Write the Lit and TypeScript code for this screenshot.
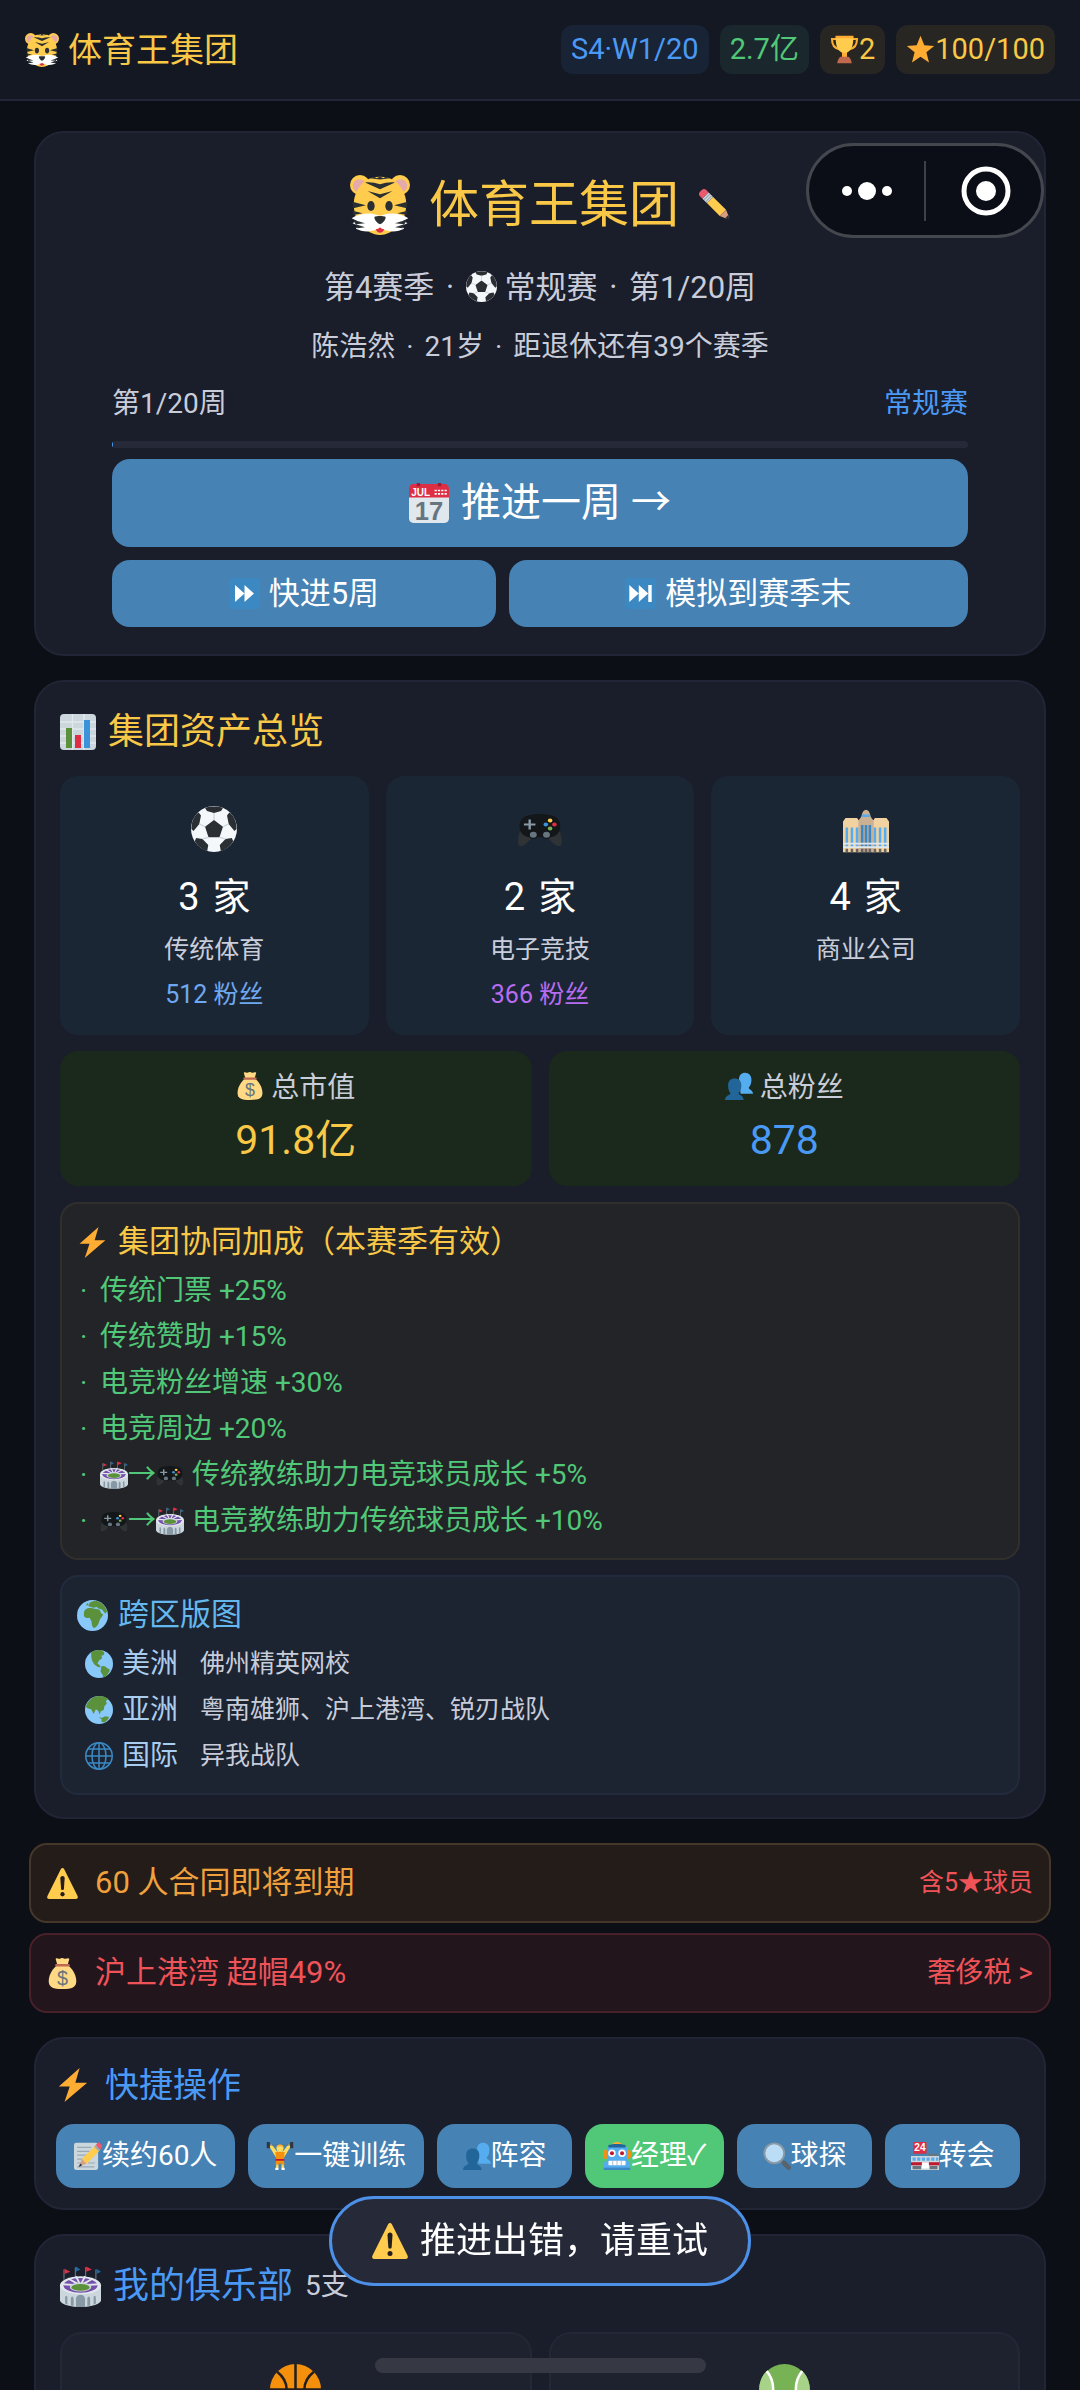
import { LitElement, html, svg, css, nothing } from "lit";
import type { SVGTemplateResult } from "lit";
import { customElement, property } from "lit/decorators.js";
import { classMap } from "lit/directives/class-map.js";
import { styleMap } from "lit/directives/style-map.js";

// All glyphs are drawn on a 36x36 grid.
const ICONS: Record<string, SVGTemplateResult> = {
  tiger: svg`
    <circle cx="6" cy="6" r="6" fill="#ffcc4d" />
    <circle cx="30" cy="6" r="6" fill="#ffcc4d" />
    <circle cx="5.6" cy="6.4" r="3.9" fill="#e6aaaa" />
    <circle cx="30.4" cy="6.4" r="3.9" fill="#e6aaaa" />
    <path fill="#ffcc4d" d="M18 1c3 0 5.500.5 8 2 3.500 2.200 6.500 6.500 7.500 11.500.8 5-.5 12-4 16C26 33.500 22.500 36 18 36S10 33.500 6.500 30.500c-3.500-4-4.800-11-4-16C3.500 9.500 6.500 5.200 10 3c2.500-1.500 5-2 8-2z" />
    <path fill="#292f33" d="M9 4.500c3-.3 6 .1 9 1.100 3-1 6-1.400 9-1.100L18 8.500zM10.500 9.600l7.500 1.900 7.500-1.900L18 14zM12 1.900l2.500-.9 1.500.9 2-1 2 1 1.500-.9 2.500.9-6 .8z" />
    <path fill="#292f33" d="M1.500 16l8 2.200L2 20zM34.500 16l-8 2.200L34 20zM1.500 21.500l6 1.500-5.500 1zM34.500 21.500l-6 1.500 5.500 1z" />
    <path fill="#fff" d="M1 26c4-2.600 9-3.300 13-2.600l4 1 4-1c4-.7 9 0 13 2.600l-3 1.500 2.500 1.500-3.500 1.500 1.500 1.800c-4 2-10 2.300-14.500-.6C13.500 34.600 7.500 34.300 3.500 32.300L5 30.500 1.500 29 4 27.500z" />
    <path fill="#292f33" d="M2 26.800l7 2.200-5.500.5 5.500 1.800-4.500.7zM34 26.800l-7 2.200 5.500.5-5.500 1.800 4.500.7z" />
    <ellipse cx="12.600" cy="18.600" rx="2.200" ry="3" fill="#292f33" />
    <ellipse cx="23.400" cy="18.600" rx="2.200" ry="3" fill="#292f33" />
    <path fill="#292f33" d="M14.700 25c1.500-.6 5.100-.6 6.600 0 .4 1.800-1.800 4-3.300 4.500-1.500-.5-3.700-2.700-3.300-4.500z" />
    <path fill="#dd2e44" d="M15.500 32.600c1 0 2-.5 2.500-1.200.5.700 1.500 1.200 2.500 1.200-.4 1.500-1.300 2-2.500 2s-2.100-.5-2.500-2z" />`,
  trophy: svg`
    <path fill="none" stroke="#ffac33" stroke-width="2.600" d="M9 5H2.500c0 7 2.500 11.500 9 12.500M27 5h6.500c0 7-2.500 11.500-9 12.500" />
    <path fill="#ffcc4d" d="M7 2h22c0 10-1.500 17-8 20v5h-6v-5C8.500 19 7 12 7 2z" />
    <path fill="#ffac33" d="M7 1h22v3H7zM15 22h6v6h-6z" />
    <path fill="#c1694f" d="M13 27h10c2 1.500 3.500 4 4 8H9c.5-4 2-6.500 4-8z" />`,
  star: svg`<path fill="#ffac33" d="M18 1l4.700 11.700L35 13.500l-9.700 8L28.600 34 18 27 7.400 34l3.300-12.500-9.700-8 12.300-.8z" />`,
  pencil: svg`
    <path fill="#ea596e" d="M2 9C.8 7.800.8 5.700 2 4.500L4.500 2C5.700.8 7.800.8 9 2l3 3-7 7z" />
    <path fill="#ccd6dd" d="M5 12l7-7 5 5-7 7z" />
    <path stroke="#99aab5" stroke-width="1.200" d="M6.500 13.500l7-7M8.500 15.500l7-7" />
    <path fill="#ffcc4d" d="M10 17l7-7 14.500 14.500-7 7z" />
    <path fill="#d99e82" d="M24.500 31.500l7-7L35 33c.5 1.500-.5 2.500-2 2z" />
    <path fill="#292f33" d="M34 30.500l1.200 3.200c.3 1-.5 1.800-1.500 1.500l-3.200-1.200z" />`,
  soccer: svg`
    <circle cx="18" cy="18" r="18" fill="#f5f8fa" />
    <path fill="#292f33" d="M18 11l7 5.200-2.700 8.300h-8.600L11 16.200zM11 1.500C15 0 21 0 25 1.500L23.500 4 18 5.500 12.500 4zM.5 15C1 11 3 7 6 5l1.800 2.500L6.500 14 2 19.500.3 18zM35.500 15C35 11 33 7 30 5l-1.800 2.500L29.500 14l4.500 5.500 1.700-1.500zM4 25l5 .8 4.500 4.700-.8 4.700C8.500 34 5 31 3 27.500zM32 25l-5 .8-4.500 4.700.8 4.700c4.200-1.200 7.700-4.200 9.700-7.700z" />
    <path stroke="#ccd6dd" d="M18 11V5.500M25 16.200l4.500-2.200M11 16.200L6.500 14M22.300 24.500l4.700 1.300M13.700 24.500L9 25.800" />`,
  calendar: svg`
    <path fill="#e1e8ed" d="M0 9h36v23c0 2.200-1.800 4-4 4H4c-2.200 0-4-1.800-4-4z" />
    <path fill="#dd2e44" d="M4 1h28c2.200 0 4 1.800 4 4v8H0V5c0-2.200 1.800-4 4-4z" />
    <path fill="#fff" d="M23 6h2v1.500h-2zM26 6h2v1.500h-2zM29 6h2v1.500h-2zM32 6h2v1.500h-2zM23 9h2v1.500h-2zM26 9h2v1.500h-2zM29 9h2v1.500h-2zM32 9h2v1.500h-2z" />
    <path fill="#a01c30" d="M7 0h3v3H7zM26 0h3v3h-3z" />
    <text x="2" y="11.500" font-size="9" font-weight="700" fill="#fff">JUL</text>
    <text x="18" y="33" font-size="23" font-weight="700" fill="#66757f" text-anchor="middle">17</text>`,
  forward: svg`
    <rect width="36" height="36" rx="4" fill="#3b88c3" />
    <path fill="#fff" d="M7 8l11 10L7 28zM18 8l11 10-11 10z" />`,
  skip: svg`
    <rect width="36" height="36" rx="4" fill="#3b88c3" />
    <path fill="#fff" d="M5 8l11 10L5 28zM16 8l11 10-11 10zM27 8h4v20h-4z" />`,
  chart: svg`
    <rect width="36" height="36" rx="4" fill="#ccd6dd" />
    <path stroke="#e1e8ed" stroke-width="1.500" d="M0 8h36M0 15h36M0 22h36M0 29h36M12.500 0v36M24 0v36" />
    <path fill="#5c913b" d="M6 14h6v20H6z" />
    <path fill="#dd2e44" d="M15 21h6v13h-6z" />
    <path fill="#3b94d9" d="M24 6h6v28h-6z" />`,
  gamepad: svg`
    <g transform="translate(1 4) scale(.94 .82)">
      <path fill="#2f3336" d="M2 18C-.5 24-1 31 1 33c3 2 8-4 11-9zM34 18c2.500 6 3 13 1 15-3 2-8-4-11-9z" />
      <path fill="#141719" d="M9 4c6-1.500 12-1.500 18 0 5 .5 8 5 8 11s-4 10-9 10H10c-5 0-9-4-9-10S4 4.500 9 4z" />
      <circle cx="12.500" cy="22.500" r="4" fill="#141719" />
      <circle cx="23.500" cy="22.500" r="4" fill="#141719" />
      <circle cx="12.500" cy="22.500" r="2.900" fill="#66757f" />
      <circle cx="23.500" cy="22.500" r="2.900" fill="#66757f" />
      <path fill="#8899a6" d="M8.500 8h2v3.800h3.800v2h-3.800v3.800h-2v-3.800H4.700v-2h3.800z" />
      <circle cx="26.500" cy="9" r="1.900" fill="#ffcc4d" />
      <circle cx="26.500" cy="16.500" r="1.900" fill="#77b255" />
      <circle cx="22.900" cy="12.700" r="1.900" fill="#3b94d9" />
      <circle cx="30.100" cy="12.700" r="1.900" fill="#dd2e44" />
    </g>`,
  hotel: svg`
    <g transform="translate(0 3) scale(1 .92)">
      <path fill="#f3d2a2" d="M0 10l2-3h9l2 3v26H0zM23 10l2-3h9l2 3v26H23z" />
      <path fill="#ccb094" d="M12 10c0-2 2-2.500 2.500-5C15 2 16.500 0 18 0s3 2 3.500 5c.5 2.500 2.500 3 2.500 5v26H12z" />
      <path fill="#55acee" d="M2 15h2v17H2zM6 15h2v17H6zM10 15h2v17h-2zM24 15h2v17h-2zM28 15h2v17h-2zM32 15h2v17h-2zM15 4h6v2h-6z" />
      <path fill="#3b88c3" d="M14 13h2v19h-2zM17 13h2v19h-2zM20 13h2v19h-2z" />
      <path fill="#e1e8ed" d="M0 28h36v1.500H0zM0 31h36v1.500H0z" />
      <path fill="#66625e" d="M2 33h2v3H2zM6 33h2v3H6zM10 33h2v3h-2zM14 33h2v3h-2zM17 33h2v3h-2zM20 33h2v3h-2zM24 33h2v3h-2zM28 33h2v3h-2zM32 33h2v3h-2z" />
    </g>`,
  moneybag: svg`
    <path fill="#ffd983" d="M11 9h14c6 5 9 12 9 18 0 7-5 9-16 9S2 34 2 27C2 21 5 14 11 9z" />
    <path fill="#ffd983" d="M10 1c2-1.500 3 .5 4.500 0S17 0 18 0s2 1 3.500 1S24-.5 26 1l-2 7H12z" />
    <path fill="#bf6952" d="M10.500 7h15c1.500 0 1.500 3 0 3h-15c-1.500 0-1.500-3 0-3z" />
    <text x="18" y="31" font-size="23" fill="#67757f" text-anchor="middle">$</text>`,
  people: svg`
    <path fill="#55acee" d="M18 10c0-6 3-9 8-9s8 4 8 9-1.500 8-3.500 10c0 3 5.500 3 5.500 8H20z" />
    <path fill="#226699" d="M4 17c0-5 3-8.500 8.500-8.500S21 12 21 17s-1.500 8-3.500 10c0 3 6.500 3 6.500 9H0c0-6 7-6 7-9-2-2-3-5-3-10z" />`,
  bolt: svg`<path fill="#ffac33" d="M25 0L3 19.500h11.500L9 36l24-20.500H20.500z" />`,
  stadium: svg`
    <path stroke="#66757f" d="M3.500 3v9M13.500 1v9M22.500 1v9M31.500 3v9" />
    <path fill="#dd2e44" d="M4 2.500L9 5 4 7zM23 .5L28 3l-5 2z" />
    <path fill="#226699" d="M14 .5L18 3l-4 2zM32 2.500L36 5l-4 2z" />
    <path fill="#ccd6dd" d="M0 17v13c0 3 8 6 18 6s18-3 18-6V17z" />
    <ellipse cx="18" cy="17" rx="18" ry="8" fill="#e1e8ed" />
    <ellipse cx="18" cy="17" rx="15" ry="6.500" fill="#744eaa" />
    <path stroke="#e1e8ed" stroke-width="1.600" d="M18 17L7 11M18 17L14 9M18 17l4-8M18 17l11-6M18 17L2 16M18 17l16-1" />
    <ellipse cx="18" cy="18.500" rx="9.500" ry="4" fill="#ccd6dd" />
    <ellipse cx="18" cy="18.800" rx="8" ry="3" fill="#5c913b" />
    <path fill="#8899a6" d="M14 36v-7c0-5 8-5 8 0v7zM9.500 34.800V29c0-3 2.500-3 2.500 0v6zM24 35v-6c0-3 2.500-3 2.500 0v5.800zM4.500 33v-5c0-2.500 2-2.500 2 0v6zM29.500 34v-6c0-2.500 2-2.500 2 0v5z" />`,
  africa: svg`
    <circle cx="18" cy="18" r="18" fill="#88c9f9" />
    <path fill="#5c913b" d="M9 12c2-3 6-3 9-2.500 3 1 6 1 8 1.500l2.500 5 2 .5c-1 3-4 5-4.500 8-1 4-3 7-6 8-2 0-3-4-3-7 0-2-2-3-2-5-4 1-7 0-7-3 0-2 0-4 1-5.500zM13 7l2-4 5-2c8 .5 13 6 15 12l-2 3-4-5-4-1-2-2-4 1-3-1zM10 6l3-3v3z" />`,
  americas: svg`
    <circle cx="18" cy="18" r="18" fill="#88c9f9" />
    <path fill="#5c913b" d="M8 3c4-3 10-3.500 14-2.500l3 3-1 3-3 1 1 3-4 3-2 4 3 2 1 3-4-1-4-3-3-5-1-5zM21 21c3-1 6 0 7 2l4 2c0 3-3 6-5 9l-4 1.500c1-4-2-5-3-8z" />`,
  asia: svg`
    <circle cx="18" cy="18" r="18" fill="#88c9f9" />
    <path fill="#5c913b" d="M3 9C7 3 12 0 18 0c5 0 9 1.500 12 4l-3 2 1 4-3 3-1 5-4 2-1 4-2-5-3-2-3 6-3-6-4-1-3-2zM18 27l3 1 3 1-3 1zM22 28l4-2 5 1c-1 3-3 5-6 7l-4-1z" />`,
  meridians: svg`
    <g fill="none" stroke="#3b88c3" stroke-width="2">
      <circle cx="18" cy="18" r="17" />
      <ellipse cx="18" cy="18" rx="9" ry="17" />
      <path d="M18 1v34M1 18h34M4 9h28M4 27h28" />
    </g>`,
  warning: svg`
    <path fill="#ffcc4d" d="M2.700 36c-2 0-3.200-1.700-2.200-3.600L16 1.500c1-2 3-2 4 0l15.500 30.900c1 1.900-.2 3.600-2.200 3.600z" />
    <path fill="#231f20" d="M15.500 12c0-3.500 5-3.500 5 0l-.8 12c-.2 2.200-3.200 2.200-3.400 0z" />
    <circle cx="18" cy="30.500" r="2.500" fill="#231f20" />`,
  memo: svg`
    <rect y="1" width="31" height="35" rx="3" fill="#ccd6dd" />
    <path stroke="#99aab5" stroke-width="1.600" d="M4 7h18M4 12h16M4 17h12M4 22h9M4 27h5M18 27h9M4 32h22" />
    <path fill="#ffcc4d" d="M10 22L27 5l6 6-17 17z" />
    <path fill="#d99e82" d="M10 22l6 6-9 3z" />
    <path fill="#292f33" d="M8 27.500l2.500 2.500L6 32z" />
    <path fill="#99aab5" d="M26 6l2-2 6 6-2 2z" />
    <path fill="#ea596e" d="M28 4l2.500-3C32-.5 37 4 36 6l-2 4z" />`,
  lifter: svg`
    <path fill="#ffdc5d" d="M4 5l3-2 7 9h8l7-9 3 2-7 12-2 3H13l-2-3z" />
    <path stroke="#66757f" d="M3 4h30" />
    <path fill="#31373d" d="M1 0h4v8H1zM31 0h4v8h-4z" />
    <circle cx="18" cy="8" r="4.500" fill="#ffdc5d" />
    <path fill="#ffac33" d="M13.500 7C13 2 23 2 22.500 7 20 5 16 5 13.500 7z" />
    <path fill="#f4900c" d="M12 13h12l-1 11 1 5h-5l-1-3-1 3h-5l1-5z" />
    <path fill="#be1931" d="M12.500 22h11l.3 2H12.200z" />
    <path fill="#ffdc5d" d="M13 29h3v5h-3zM20 29h3v5h-3z" />
    <path fill="#fff" d="M12 33h4v3h-4zM20 33h4v3h-4z" />`,
  robot: svg`
    <path fill="#ffac33" d="M12 3c1-4 11-4 12 0z" />
    <rect y="10" width="36" height="12" rx="4" fill="#f4900c" />
    <path fill="#55acee" d="M5 7c4-3 22-3 26 0v18h2c1.500 0 2 1 2 2v9H1v-9c0-1 .5-2 2-2h2z" />
    <path fill="#226699" d="M7 4c6-2 16-2 22 0v3H7z" />
    <circle cx="11.500" cy="14.500" r="4.800" fill="#fff" />
    <circle cx="24.500" cy="14.500" r="4.800" fill="#fff" />
    <circle cx="11.500" cy="14.500" r="2.600" fill="#be1931" />
    <circle cx="24.500" cy="14.500" r="2.600" fill="#be1931" />
    <rect x="7" y="24" width="22" height="6" rx="1" fill="#fff" />
    <path stroke="#99aab5" d="M12.500 24v6M18 24v6M23.500 24v6" />
    <path fill="#3b88c3" d="M1 33h34v3H1z" />`,
  magnifier: svg`
    <path stroke="#66757f" stroke-width="3" d="M22 22l5 5" />
    <path stroke="#58636c" stroke-width="6" stroke-linecap="round" d="M27 27l6 6" />
    <circle cx="14.500" cy="14.500" r="14" fill="#8899a6" />
    <circle cx="14.500" cy="14.500" r="11.500" fill="#bbddf5" />`,
  store: svg`
    <rect x="3" width="17" height="15" rx="1" fill="#dd2e44" />
    <text x="11.500" y="12" font-size="13" font-weight="700" fill="#fff" text-anchor="middle">24</text>
    <path fill="#66757f" d="M22 15h13v3H22z" />
    <path fill="#ccd6dd" d="M0 18h36v18H0z" />
    <path fill="#55acee" d="M2 20h4v4H2zM8 20h4v4H8zM14 20h4v4h-4zM20 20h4v4h-4zM26 20h4v4h-4zM32 20h3v4h-3z" />
    <path fill="#be1931" d="M0 26h36v4H0z" />
    <path fill="#66757f" d="M2 31h11v4H2zM24 31h10v4H24z" />
    <path fill="#fff" d="M14 26h9v8h-9z" />`,
  basketball: svg`
    <circle cx="18" cy="18" r="18" fill="#f4900c" />
    <path fill="none" stroke="#231f20" stroke-width="1.800" d="M18 0v36M0 18h36M5 5.500c9 7 9 18 0 25M31 5.500c-9 7-9 18 0 25" />`,
  tennis: svg`
    <circle cx="18" cy="18" r="18" fill="#77b255" />
    <path fill="#a6d388" d="M5.500 5c6 7 6 19 0 26C-1.500 25-1.500 11 5.500 5zM30.500 5c-6 7-6 19 0 26 7-6 7-20 0-26z" />
    <path fill="none" stroke="#fff" stroke-width="1.800" d="M5.500 5c6 7 6 19 0 26M30.500 5c-6 7-6 19 0 26" />`,
};

@customElement("emoji-icon")
export class EmojiIcon extends LitElement {
  static override styles = css`
    :host {
      display: inline-block;
      flex: none;
      width: 1em;
      height: 1em;
      line-height: 1;
      vertical-align: -0.12em;
    }

    svg {
      display: block;
      width: 100%;
      height: 100%;
      overflow: visible;
      font-family: "Liberation Sans", sans-serif;
    }
  `;

  @property()
  name = "";

  override render() {
    return html`<svg viewBox="0 0 36 36" aria-hidden="true">
      ${ICONS[this.name] ?? nothing}
    </svg>`;
  }
}

const icon = (name: string) => html`<emoji-icon name=${name}></emoji-icon>`;

const separator = html`<span class="separator">·</span>`;

const ASSETS = [
  { icon: "soccer", count: 3, label: "传统体育", fans: 512, tone: "blue" },
  { icon: "gamepad", count: 2, label: "电子竞技", fans: 366, tone: "purple" },
  { icon: "hotel", count: 4, label: "商业公司", fans: 0, tone: "" },
];

const BONUSES = ["传统门票 +25%", "传统赞助 +15%", "电竞粉丝增速 +30%", "电竞周边 +20%"];

const COACHING = [
  { from: "stadium", to: "gamepad", text: "传统教练助力电竞球员成长 +5%" },
  { from: "gamepad", to: "stadium", text: "电竞教练助力传统球员成长 +10%" },
];

const REGIONS = [
  { icon: "americas", name: "美洲", teams: ["佛州精英网校"] },
  { icon: "asia", name: "亚洲", teams: ["粤南雄狮", "沪上港湾", "锐刃战队"] },
  { icon: "meridians", name: "国际", teams: ["异我战队"] },
];

const ACTIONS = [
  { icon: "memo", label: "续约60人" },
  { icon: "lifter", label: "一键训练" },
  { icon: "people", label: "阵容" },
  { icon: "robot", label: "经理✓", active: true },
  { icon: "magnifier", label: "球探" },
  { icon: "store", label: "转会" },
];

@customElement("app-root")
export class AppRoot extends LitElement {
  static override styles = css`
    :host {
      --gold: #f9c846;
      --blue: #4a9af5;
      --green: #50c878;
      --red: #ef5358;
      --steel: #4682b4;
      --muted: #c9cdda;
      display: block;
      height: 100vh;
      overflow: hidden;
      background: #0c0f16;
      color: #fff;
      font-family: Roboto, "Noto Sans CJK SC", sans-serif;
      font-size: 28px;
      line-height: 40px;
    }

    h1,
    h2,
    h3,
    p,
    ul {
      margin: 0;
      padding: 0;
      font-weight: 400;
      list-style: none;
    }

    button {
      border: 0;
      padding: 0;
      color: #fff;
      font: inherit;
      cursor: pointer;
    }

    .topbar {
      display: flex;
      align-items: center;
      justify-content: space-between;
      padding: 25px;
      border-bottom: 2px solid #222637;
      background: #141823;
    }

    .brand {
      display: flex;
      align-items: center;
      gap: 9px;
      color: var(--gold);
      font-size: 34px;
    }

    .pills {
      display: flex;
      gap: 11px;
    }

    .pill {
      display: flex;
      align-items: center;
      padding: 0 10px;
      border-radius: 12px;
      font-size: 29px;
      line-height: 49px;
    }

    .pill.season {
      background: #182336;
      color: var(--blue);
    }

    .pill.cash {
      background: #1a272c;
      color: var(--green);
    }

    .pill.gold {
      background: #272622;
      color: var(--gold);
    }

    main {
      display: flex;
      flex-direction: column;
      gap: 24px;
      padding: 30px 34px;
    }

    .card {
      padding: 24px;
      border: 2px solid #212535;
      border-radius: 30px;
      background: #1a1d2a;
    }

    .hero {
      padding: 38px 76px 27px;
      text-align: center;
    }

    .title {
      display: flex;
      align-items: center;
      justify-content: center;
      gap: 19px;
    }

    .title h1 {
      color: var(--gold);
      font-size: 50px;
      line-height: 68px;
    }

    .title .mascot {
      font-size: 60px;
    }

    .rename {
      background: none;
      font-size: 32px;
    }

    .season-line {
      margin-top: 25px;
      color: var(--muted);
      font-size: 31px;
      line-height: 48px;
    }

    .owner {
      margin-top: 15px;
      color: var(--muted);
    }

    .separator {
      margin: 0 4px;
    }

    .week {
      display: flex;
      justify-content: space-between;
      margin-top: 17px;
      color: var(--muted);
    }

    .stage {
      color: var(--blue);
    }

    .progress {
      height: 7px;
      margin-top: 17px;
      border-radius: 4px;
      overflow: hidden;
      background: #262a38;
    }

    .progress-fill {
      height: 100%;
      background: var(--blue);
    }

    .advance {
      display: flex;
      align-items: center;
      justify-content: center;
      gap: 12px;
      width: 100%;
      height: 88px;
      margin-top: 11px;
      border-radius: 18px;
      background: var(--steel);
      font-size: 40px;
    }

    .skips {
      display: flex;
      gap: 13px;
      margin-top: 13px;
    }

    .skips button {
      display: flex;
      flex: 1 1 auto;
      align-items: center;
      justify-content: center;
      gap: 9px;
      height: 67px;
      border-radius: 18px;
      background: var(--steel);
      font-size: 31px;
    }

    .heading {
      display: flex;
      align-items: center;
      gap: 12px;
      font-size: 36px;
      line-height: 52px;
    }

    .gold-text {
      color: var(--gold);
    }

    .blue-text {
      color: var(--blue);
    }

    .overview {
      padding-bottom: 22px;
    }

    .assets {
      display: grid;
      grid-template-columns: repeat(3, 1fr);
      gap: 17px;
      margin-top: 18px;
    }

    .asset {
      display: flex;
      flex-direction: column;
      align-items: center;
      padding: 30px 12px 18px;
      border-radius: 18px;
      background: #1b2635;
      font-size: 25px;
      line-height: 45px;
    }

    .asset emoji-icon {
      font-size: 46px;
    }

    .count {
      display: flex;
      gap: 13px;
      margin: 16px 0 1px;
      font-size: 38px;
      line-height: 58px;
    }

    .label {
      color: var(--muted);
    }

    .fans.blue {
      color: #6ea8f0;
    }

    .fans.purple {
      color: #b76cf0;
    }

    .totals {
      display: grid;
      grid-template-columns: repeat(2, 1fr);
      gap: 17px;
      margin-top: 16px;
    }

    .total {
      padding: 17px 12px 14px;
      border-radius: 18px;
      background: #1b281c;
      text-align: center;
    }

    .total .value {
      font-size: 41px;
      line-height: 64px;
    }

    .box {
      margin-top: 16px;
      padding: 14px 15px;
      border: 2px solid;
      border-radius: 18px;
    }

    .box.synergy {
      border-color: #302f2c;
      background: #232428;
    }

    .box.regions {
      margin-top: 15px;
      border-color: #222b3c;
      background: #1c2432;
    }

    .box h3 {
      display: flex;
      align-items: center;
      gap: 10px;
      margin-bottom: 2px;
      font-size: 31px;
      line-height: 48px;
    }

    .regions h3 {
      color: #64b8ee;
    }

    .bonus {
      display: flex;
      align-items: center;
      color: var(--green);
      line-height: 46px;
    }

    .bonus .dot {
      width: 20px;
      padding-left: 3px;
    }

    .bonus .transfer {
      display: flex;
      align-items: center;
      margin-right: 8px;
    }

    .region {
      display: flex;
      align-items: center;
      padding-left: 8px;
      line-height: 46px;
    }

    .region .name {
      margin: 0 22px 0 9px;
      color: #a9cdee;
    }

    .region .teams {
      color: var(--muted);
      font-size: 25px;
    }

    .alerts {
      display: flex;
      flex-direction: column;
      gap: 10px;
      margin: 0 -5px;
    }

    .alert {
      display: flex;
      align-items: center;
      gap: 17px;
      height: 80px;
      padding: 0 16px;
      border: 2px solid;
      border-radius: 18px;
      box-sizing: border-box;
      font-size: 31px;
      text-decoration: none;
    }

    .alert .note {
      margin-left: auto;
      color: var(--red);
      font-size: 28px;
    }

    .alert .note.small {
      font-size: 25px;
    }

    .alert.contract {
      border-color: #45372a;
      background: #231c19;
      color: #f0a03c;
    }

    .alert.tax {
      border-color: #47202a;
      background: #22151c;
      color: var(--red);
    }

    .quick {
      padding: 20px 24px 20px 20px;
    }

    .quick .heading {
      gap: 15px;
      font-size: 34px;
    }

    .actions {
      display: flex;
      gap: 13px;
      margin-top: 13px;
    }

    .action {
      display: flex;
      flex: 1 1 auto;
      align-items: center;
      justify-content: center;
      min-width: 135px;
      height: 64px;
      padding: 0 16px;
      border-radius: 18px;
      background: var(--steel);
      white-space: nowrap;
    }

    .action.active {
      background: var(--green);
    }

    .clubs .heading emoji-icon {
      font-size: 41px;
    }

    .clubs .heading small {
      color: var(--muted);
      font-size: 28px;
    }

    .club-grid {
      display: grid;
      grid-template-columns: repeat(2, 1fr);
      gap: 17px;
      margin-top: 20px;
    }

    .club {
      display: flex;
      justify-content: center;
      padding: 30px;
      border: 2px solid #232736;
      border-radius: 22px;
      background: #1e212e;
      font-size: 51px;
    }

    .capsule {
      position: fixed;
      top: 143px;
      right: 36px;
      display: flex;
      align-items: center;
      border: 3px solid #45474f;
      border-radius: 48px;
      background: #0b0e17;
    }

    .capsule button {
      width: 115px;
      height: 89px;
      background: none;
    }

    .capsule button:last-child {
      padding-left: 4px;
    }

    .capsule svg {
      display: block;
      margin: auto;
      fill: #fff;
    }

    .divider {
      width: 2px;
      height: 60px;
      background: #3d4048;
    }

    .toast-layer {
      position: fixed;
      right: 0;
      bottom: 104px;
      left: 0;
      display: flex;
      justify-content: center;
      pointer-events: none;
    }

    .toast {
      display: flex;
      align-items: center;
      gap: 12px;
      padding: 0 40px;
      border: 3px solid #4c90e8;
      border-radius: 45px;
      background: #262938;
      font-size: 36px;
      line-height: 84px;
    }

    .home-bar {
      position: fixed;
      right: 0;
      bottom: 17px;
      left: 0;
      width: 331px;
      height: 15px;
      margin: 0 auto;
      border-radius: 8px;
      background: #363944;
    }
  `;

  @property({ type: Number })
  progress = 0.15;

  override render() {
    return html`
      <header class="topbar">
        <div class="brand">${icon("tiger")}<span>体育王集团</span></div>
        <div class="pills">
          <span class="pill season">S4·W1/20</span>
          <span class="pill cash">2.7亿</span>
          <span class="pill gold">${icon("trophy")}2</span>
          <span class="pill gold">${icon("star")}100/100</span>
        </div>
      </header>
      <main>
        ${this.renderHero()} ${this.renderOverview()} ${this.renderAlerts()}
        ${this.renderQuick()} ${this.renderClubs()}
      </main>
      ${this.renderOverlays()}
    `;
  }

  renderHero() {
    return html`
      <section class="card hero">
        <div class="title">
          <emoji-icon class="mascot" name="tiger"></emoji-icon>
          <h1>体育王集团</h1>
          <button class="rename" aria-label="改名">${icon("pencil")}</button>
        </div>
        <p class="season-line">
          第4赛季 ${separator} ${icon("soccer")} 常规赛 ${separator} 第1/20周
        </p>
        <p class="owner">
          陈浩然 ${separator} 21岁 ${separator} 距退休还有39个赛季
        </p>
        <div class="week">
          <span>第1/20周</span>
          <span class="stage">常规赛</span>
        </div>
        <div class="progress">
          <div
            class="progress-fill"
            style=${styleMap({ width: `${this.progress}%` })}
          ></div>
        </div>
        <button class="advance">${icon("calendar")}<span>推进一周 →</span></button>
        <div class="skips">
          <button>${icon("forward")}<span>快进5周</span></button>
          <button>${icon("skip")}<span>模拟到赛季末</span></button>
        </div>
      </section>
    `;
  }

  renderOverview() {
    return html`
      <section class="card overview">
        <h2 class="heading gold-text">${icon("chart")}集团资产总览</h2>
        <div class="assets">
          ${ASSETS.map(
            (a) => html`
              <div class="asset">
                ${icon(a.icon)}
                <span class="count"><span>${a.count}</span><span>家</span></span>
                <span class="label">${a.label}</span>
                ${a.fans
                  ? html`<span class="fans ${a.tone}">${a.fans} 粉丝</span>`
                  : nothing}
              </div>
            `
          )}
        </div>
        <div class="totals">
          <div class="total">
            <div class="label">${icon("moneybag")} 总市值</div>
            <div class="value gold-text">91.8亿</div>
          </div>
          <div class="total">
            <div class="label">${icon("people")} 总粉丝</div>
            <div class="value blue-text">878</div>
          </div>
        </div>
        <div class="box synergy">
          <h3 class="gold-text">${icon("bolt")}集团协同加成（本赛季有效）</h3>
          <ul>
            ${BONUSES.map(
              (text) =>
                html`<li class="bonus"><span class="dot">·</span>${text}</li>`
            )}
            ${COACHING.map(
              (c) => html`
                <li class="bonus">
                  <span class="dot">·</span>
                  <span class="transfer">${icon(c.from)}→${icon(c.to)}</span>
                  ${c.text}
                </li>
              `
            )}
          </ul>
        </div>
        <div class="box regions">
          <h3>${icon("africa")}跨区版图</h3>
          <ul>
            ${REGIONS.map(
              (r) => html`
                <li class="region">
                  ${icon(r.icon)}
                  <span class="name">${r.name}</span>
                  <span class="teams">${r.teams.join("、")}</span>
                </li>
              `
            )}
          </ul>
        </div>
      </section>
    `;
  }

  renderAlerts() {
    return html`
      <div class="alerts">
        <a class="alert contract" href="#contracts">
          ${icon("warning")}
          <span>60 人合同即将到期</span>
          <span class="note small">含5★球员</span>
        </a>
        <a class="alert tax" href="#tax">
          ${icon("moneybag")}
          <span>沪上港湾 超帽49%</span>
          <span class="note">奢侈税 &gt;</span>
        </a>
      </div>
    `;
  }

  renderQuick() {
    return html`
      <section class="card quick">
        <h2 class="heading blue-text">${icon("bolt")}快捷操作</h2>
        <div class="actions">
          ${ACTIONS.map(
            (a) => html`
              <button class=${classMap({ action: true, active: !!a.active })}>
                ${icon(a.icon)}<span>${a.label}</span>
              </button>
            `
          )}
        </div>
      </section>
    `;
  }

  renderClubs() {
    return html`
      <section class="card clubs">
        <h2 class="heading blue-text">
          ${icon("stadium")}<span>我的俱乐部</span><small>5支</small>
        </h2>
        <div class="club-grid">
          <div class="club">${icon("basketball")}</div>
          <div class="club">${icon("tennis")}</div>
        </div>
      </section>
    `;
  }

  renderOverlays() {
    return html`
      <div class="capsule">
        <button aria-label="更多">
          <svg width="52" height="20" viewBox="0 0 52 20">
            <circle cx="6" cy="10" r="5" />
            <circle cx="26" cy="10" r="9" />
            <circle cx="46" cy="10" r="5" />
          </svg>
        </button>
        <span class="divider"></span>
        <button aria-label="关闭">
          <svg width="50" height="50" viewBox="0 0 50 50">
            <circle cx="25" cy="25" r="22" fill="none" stroke="#fff" stroke-width="5" />
            <circle cx="25" cy="25" r="10" />
          </svg>
        </button>
      </div>
      <div class="toast-layer">
        <div class="toast" role="alert">
          ${icon("warning")}<span>推进出错，请重试</span>
        </div>
      </div>
      <div class="home-bar"></div>
    `;
  }
}
